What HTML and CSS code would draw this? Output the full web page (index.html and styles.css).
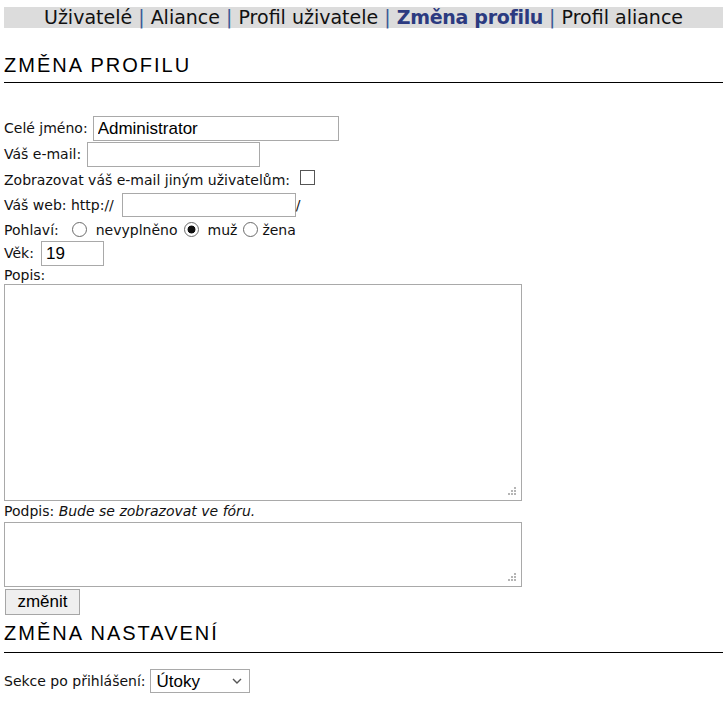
FILE: index.html
```html
<!DOCTYPE html>
<html lang="cs">
<head>
<meta charset="utf-8">
<title>Změna profilu</title>
<link rel="stylesheet" href="styles.css">
</head>
<body>
<nav class="nav">
  <a class="nav-link">Uživatelé</a><span class="sep"> | </span><a class="nav-link">Aliance</a><span class="sep"> | </span><a class="nav-link">Profil uživatele</a><span class="sep"> | </span><a class="nav-link active">Změna profilu</a><span class="sep"> | </span><a class="nav-link">Profil aliance</a>
</nav>

<h2 class="heading">ZMĚNA PROFILU</h2>

<form class="form">
  <div class="row r1"><span class="lbl">Celé jméno:</span><input class="field w-name" type="text" value="Administrator"></div>
  <div class="row r2"><span class="lbl">Váš e-mail:</span><input class="field w-mail" type="text"></div>
  <div class="row r3"><span class="lbl">Zobrazovat váš e-mail jiným uživatelům:</span><input class="chk" type="checkbox"></div>
  <div class="row r4"><span class="lbl">Váš web: http://</span><input class="field w-web" type="text"><span class="lbl">/</span></div>
  <div class="row r5"><span class="lbl">Pohlaví:</span><input class="radio rad1" type="radio" name="sex"><span class="lbl opt1">nevyplněno</span><input class="radio rad2" type="radio" name="sex" checked><span class="lbl opt2">muž</span><input class="radio rad3" type="radio" name="sex"><span class="lbl opt3">žena</span></div>
  <div class="row r6"><span class="lbl">Věk:</span><input class="field w-age" type="text" value="19"></div>
  <div class="label-row r7">Popis:</div>
  <textarea class="area area-big"></textarea>
  <div class="label-row r8">Podpis: <em>Bude se zobrazovat ve fóru.</em></div>
  <textarea class="area area-small"></textarea>
  <div class="btn-row"><button class="btn" type="button">změnit</button></div>
</form>

<h2 class="heading heading-2">ZMĚNA NASTAVENÍ</h2>

<div class="row r-sel"><span class="lbl">Sekce po přihlášení:</span><select class="sel"><option>Útoky</option></select></div>
</body>
</html>
```

FILE: styles.css
```css
html, body {
  background: #fff;
}
body {
  margin: 7px 4px 0 4px;
  font-family: "DejaVu Sans", Verdana, sans-serif;
  font-size: 14px;
  color: #111;
}

.nav {
  background: #dcdcdc;
  height: 21px;
  line-height: 21px;
  text-align: center;
  font-family: "DejaVu Sans", Verdana, sans-serif;
  font-size: 19px;
  white-space: nowrap;
}
.nav-link {
  color: #111;
  text-decoration: none;
}
.nav-link.active {
  color: #2b3a80;
  font-weight: bold;
  letter-spacing: -0.3px;
}
.sep {
  color: #3a5a96;
}

.heading {
  font-family: "Liberation Sans", Arial, sans-serif;
  font-weight: normal;
  font-size: 20px;
  letter-spacing: 2px;
  line-height: 24px;
  color: #000;
  margin: 25px 0 0 0;
  padding-bottom: 5px;
  border-bottom: 1px solid #000;
}
.heading-2 {
  margin-top: 6px;
  padding-bottom: 7px;
}

.form {
  margin: 32px 0 0 0;
}
.row {
  display: flex;
  align-items: center;
  white-space: nowrap;
}
.r1, .r2, .r4, .r6 { height: 26px; }
.r3 { height: 25px; }
.r5 { height: 22px; }
.lbl {
  display: inline-block;
}

.field {
  box-sizing: border-box;
  height: 25px;
  margin: 0 0 0 5px;
  padding: 1px 4px 0 4px;
  border: 1px solid #a9a9a9;
  border-radius: 0;
  background: #fff;
  font-family: "Liberation Sans", Arial, sans-serif;
  font-size: 17px;
  color: #000;
  outline: none;
}
.w-name { width: 246px; }
.w-mail { width: 173px; margin-left: 6px; }
.w-web { width: 174px; height: 24px; margin-left: 8px; }
.w-age { width: 63px; margin-left: 7px; }

.chk {
  -webkit-appearance: none;
  appearance: none;
  box-sizing: border-box;
  width: 15px;
  height: 15px;
  margin: 0 0 4px 10px;
  border: 1px solid #555;
  background: #fff;
}

.radio {
  -webkit-appearance: none;
  appearance: none;
  box-sizing: border-box;
  width: 15px;
  height: 15px;
  margin: 1px 0 0 0;
  border: 1px solid #6b6b6b;
  border-radius: 50%;
  background: #fff;
}
.radio:checked {
  background: radial-gradient(circle, #111 0, #111 3.6px, #fff 4.3px);
}
.rad1 { margin-left: 13px; }
.opt1 { margin-left: 9px; }
.rad2 { margin-left: 6px; }
.opt2 { margin-left: 9px; }
.rad3 { margin-left: 6px; }
.opt3 { margin-left: 4px; }

.label-row {
  height: 18px;
  line-height: 18px;
}
.r5 .lbl { padding-top: 2px; }
.r8 { height: 21px; line-height: 20px; }

.area {
  display: block;
  box-sizing: border-box;
  width: 518px;
  margin: 0;
  border: 1px solid #a9a9a9;
  border-radius: 0;
  resize: none;
  outline: none;
  background: #fff url("data:image/svg+xml;utf8,<svg xmlns='http://www.w3.org/2000/svg' width='10' height='10'><g fill='%23b5b5b5'><rect x='7' y='0' width='2' height='2'/><rect x='4' y='3' width='2' height='2'/><rect x='7' y='3' width='2' height='2'/><rect x='1' y='6' width='2' height='2'/><rect x='4' y='6' width='2' height='2'/><rect x='7' y='6' width='2' height='2'/></g></svg>") no-repeat right 4px bottom 3px;
}
.area-big { height: 217px; }
.area-small { height: 65px; }

.btn-row {
  padding-top: 2px;
  padding-left: 1px;
}
.btn {
  box-sizing: border-box;
  width: 75px;
  height: 26px;
  padding: 0;
  border: 1px solid #a6a6a6;
  border-radius: 0;
  background: #efefef;
  font-family: "Liberation Sans", Arial, sans-serif;
  font-size: 17px;
  color: #000;
}

.r-sel {
  height: 24px;
  margin-top: 16px;
}
.sel {
  -webkit-appearance: none;
  appearance: none;
  box-sizing: border-box;
  width: 100px;
  height: 24px;
  margin-left: 4px;
  padding: 0 0 0 6px;
  border: 1px solid #a9a9a9;
  border-radius: 0;
  font-family: "Liberation Sans", Arial, sans-serif;
  font-size: 17px;
  color: #000;
  background: #fff url("data:image/svg+xml;utf8,<svg xmlns='http://www.w3.org/2000/svg' width='10' height='6'><path d='M1 1 L5 5 L9 1' fill='none' stroke='%23555' stroke-width='1.4'/></svg>") no-repeat right 7px center;
}
```
